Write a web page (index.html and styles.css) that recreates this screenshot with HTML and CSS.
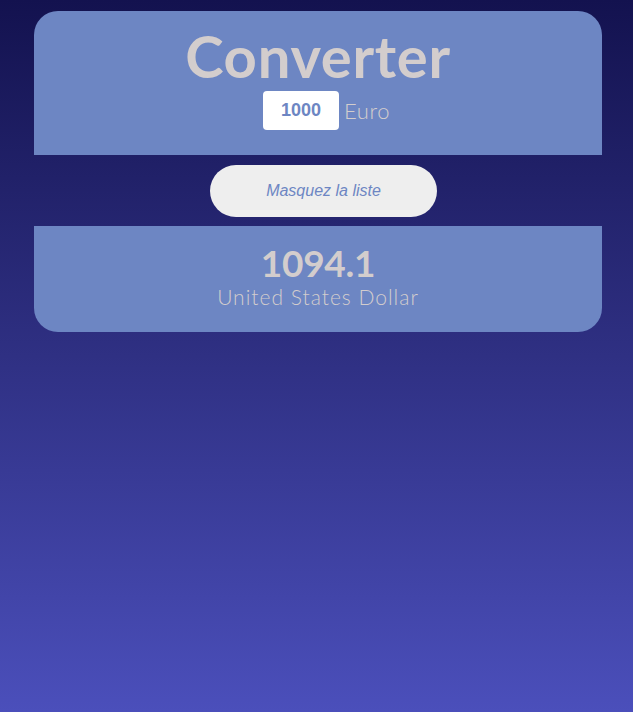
FILE: index.html
```html
<!DOCTYPE html>
<html lang="fr">
<head>
<meta charset="utf-8">
<title>Converter</title>
<link rel="stylesheet" href="styles.css">
</head>
<body>
<main class="app">
  <section class="card card-top">
    <h1 class="title">Converter</h1>
    <div class="amount-row">
      <input class="amount" type="text" value="1000">
      <span class="currency">Euro</span>
    </div>
  </section>
  <div class="toggle-row">
    <button class="toggle">Masquez la liste</button>
  </div>
  <section class="card card-bottom">
    <div class="result">1094.1</div>
    <div class="result-currency">United States Dollar</div>
  </section>
</main>
</body>
</html>
```

FILE: styles.css
```css
html, body {
  margin: 0;
  padding: 0;
  height: 100%;
}
body {
  background: linear-gradient(to bottom, #13124f 0%, #2f3083 50%, #4b4fbb 100%);
  font-family: "Lato", "Liberation Sans", sans-serif;
  min-height: 712px;
}
.app {
  width: 568px;
  margin-left: 34px;
  padding-top: 11px;
  display: flex;
  flex-direction: column;
}
.card {
  background: #6d86c3;
  display: flex;
  flex-direction: column;
  align-items: center;
}
.card-top {
  border-radius: 24px 24px 0 0;
  height: 144px;
  box-sizing: border-box;
  padding-top: 14px;
}
.title {
  margin: 0;
  font-family: "Lato", sans-serif;
  font-weight: 700;
  font-size: 58px;
  line-height: 62px;
  color: #d3cdcd;
  letter-spacing: 0.7px;
}
.amount-row {
  display: flex;
  align-items: center;
  gap: 5px;
  margin-top: 4px;
  padding-left: 17px;
}
.amount {
  width: 76px;
  height: 39px;
  box-sizing: border-box;
  border: none;
  border-radius: 4px;
  background: #ffffff;
  text-align: center;
  font-family: "Liberation Sans", sans-serif;
  font-weight: 700;
  font-size: 18px;
  color: #6d86c3;
  padding: 0;
  outline: none;
}
.currency {
  font-family: "Lato", sans-serif;
  font-weight: 300;
  font-size: 22px;
  color: #d3cdcd;
  letter-spacing: 0.6px;
}
.toggle-row {
  height: 71px;
  display: flex;
  align-items: center;
  justify-content: center;
  padding-left: 11px;
}
.toggle {
  width: 227px;
  height: 52px;
  border: none;
  border-radius: 26px;
  background: #eeeeee;
  font-family: "Liberation Sans", sans-serif;
  font-style: italic;
  font-size: 16px;
  color: #6d86c3;
  cursor: pointer;
}
.card-bottom {
  border-radius: 0 0 24px 24px;
  height: 106px;
  box-sizing: border-box;
  padding-top: 16px;
}
.result {
  font-family: "Lato", sans-serif;
  font-weight: 700;
  font-size: 37px;
  line-height: 42px;
  color: #d3cdcd;
  letter-spacing: -0.3px;
}
.result-currency {
  font-family: "Lato", sans-serif;
  font-weight: 300;
  font-size: 21px;
  line-height: 26px;
  color: #d3cdcd;
  letter-spacing: 1px;
}
```
